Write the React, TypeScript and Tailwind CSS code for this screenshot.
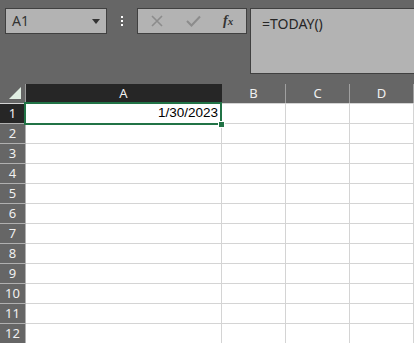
import React from "react";

const cols = [
  { id: "A", w: "w-[196px]" },
  { id: "B", w: "w-[64px]" },
  { id: "C", w: "w-[64px]" },
  { id: "D", w: "w-[64px]" },
];

const rows = Array.from({ length: 12 }, (_, i) => i + 1);

export default function App() {
  return (
    <div className="relative w-[414px] h-[343px] overflow-hidden bg-white font-['Noto_Sans',sans-serif]">
      {/* Formula bar area */}
      <div className="h-[84px] bg-[#666666] flex items-start pt-[8px] pl-[5px]">
        <div className="w-[102px] h-[26px] bg-[#b3b3b3] border border-[#404040] flex items-center justify-between pl-[6px] pr-[6px]">
          <span className="text-[14px] text-[#333333] leading-none">A1</span>
          <svg width="8" height="5" viewBox="0 0 8 5">
            <path d="M0 0 L8 0 L4 5 Z" fill="#333333" />
          </svg>
        </div>
        <div className="w-[30px] h-[26px] flex flex-col items-center justify-center gap-[2px]">
          <span className="w-[2px] h-[2px] bg-white" />
          <span className="w-[2px] h-[2px] bg-white" />
          <span className="w-[2px] h-[2px] bg-white" />
        </div>
        <div className="w-[110px] h-[26px] bg-[#b3b3b3] border border-[#404040] flex items-center">
          <svg width="12" height="12" viewBox="0 0 12 12" className="ml-[13px]">
            <path d="M1 1 L11 11 M11 1 L1 11" stroke="#8c8c8c" strokeWidth="1.6" />
          </svg>
          <svg width="15" height="12" viewBox="0 0 15 12" className="ml-[23px]">
            <path d="M1 6 L5.5 10.5 L14 1.5" stroke="#8c8c8c" strokeWidth="2" fill="none" />
          </svg>
          <span className="ml-[22px] text-[14px] italic font-bold text-[#333333] font-['Liberation_Serif',serif] leading-none">
            f<span className="text-[11px]">x</span>
          </span>
        </div>
        <div className="ml-[3px] flex-1 h-[66px] bg-[#b3b3b3] border border-[#404040] border-r-0 pl-[11px] pt-[2px]">
          <span className="text-[14px] text-[#262626]">=TODAY()</span>
        </div>
      </div>

      {/* Column header */}
      <div className="flex h-[20px] border-b border-[#d4d4d4]">
        <div className="w-[26px] h-[19px] bg-[#666666] border-r border-[#9a9a9a] relative">
          <svg width="14" height="14" viewBox="0 0 14 14" className="absolute right-[3px] bottom-[3px]">
            <path d="M13 1 L13 13 L1 13 Z" fill="#e1efe3" />
          </svg>
        </div>
        {cols.map((c) => (
          <div
            key={c.id}
            className={`${c.w} h-[19px] flex items-center justify-center text-[13px] text-[#f0f0f0] border-r ${
              c.id === "A" ? "bg-[#262626] border-[#262626]" : "bg-[#666666] border-[#a0a0a0]"
            }`}
          >
            {c.id}
          </div>
        ))}
      </div>

      {/* Rows */}
      {rows.map((r) => (
        <div key={r} className="flex h-[20px]">
          <div
            className={`w-[26px] h-[20px] border-r border-b border-[#b0b0b0] flex items-center justify-center text-[13px] text-[#f0f0f0] ${
              r === 1 ? "bg-[#262626]" : "bg-[#666666]"
            }`}
          >
            {r}
          </div>
          {cols.map((c) => (
            <div
              key={c.id}
              className={`${c.w} h-[20px] border-r border-b border-[#d4d4d4] flex items-center justify-end pr-[3px] text-[13.5px] text-black font-['Liberation_Sans',sans-serif]`}
            >
              {r === 1 && c.id === "A" ? "1/30/2023" : ""}
            </div>
          ))}
        </div>
      ))}

      {/* Selection */}
      <div className="absolute left-[24px] top-[102px] w-[198px] h-[23px] border-2 border-[#217346]" />
      <div className="absolute left-[218px] top-[121px] w-[7px] h-[7px] bg-[#217346] border border-white" />
    </div>
  );
}
